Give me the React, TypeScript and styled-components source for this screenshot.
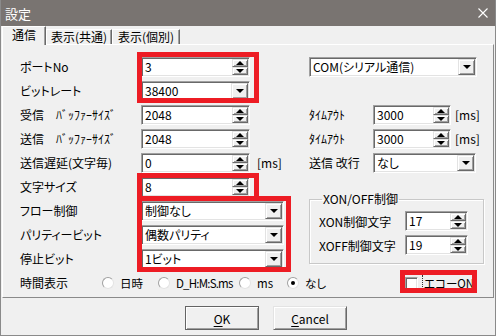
import React from "react";
import styled, { createGlobalStyle, css } from "styled-components";

const GlobalStyle = createGlobalStyle`
  html, body {
    margin: 0;
    padding: 0;
    background: #f0f0f0;
  }
  body {
    font-family: "Noto Sans CJK JP", "Noto Sans", sans-serif;
    font-size: 12px;
    color: #000;
    font-feature-settings: "palt";
  }
`;

const sunken = css`
  border: 1px solid;
  border-color: #a0a0a0 #ffffff #ffffff #a0a0a0;
  box-shadow: inset 1px 1px 0 #696969, inset -1px -1px 0 #e3e3e3;
`;

const raised = css`
  background: #f0f0f0;
  border: 1px solid;
  border-color: #e3e3e3 #696969 #696969 #e3e3e3;
  box-shadow: inset 1px 1px 0 #ffffff, inset -1px -1px 0 #a0a0a0;
`;

const Window = styled.div`
  position: relative;
  width: 496px;
  height: 336px;
  box-sizing: border-box;
  display: flex;
  flex-direction: column;
  background: #f0f0f0;
  border: 1px solid #8a8a8a;
  border-top: none;
  overflow: hidden;
`;

const TitleBar = styled.div`
  height: 26px;
  margin: 0 -1px;
  flex: none;
  display: flex;
  align-items: center;
  justify-content: space-between;
  background: #797471;
  color: #fff;
  font-size: 13px;
  padding: 0 8px 0 5px;
`;

const TabStrip = styled.div`
  height: 18px;
  flex: none;
  display: flex;
  align-items: flex-end;
  padding-left: 1px;
  position: relative;
  z-index: 1;
`;

const Tab = styled.div<{ $active?: boolean; $w: number }>`
  box-sizing: border-box;
  width: ${(p) => p.$w}px;
  height: ${(p) => (p.$active ? 19 : 15)}px;
  margin-bottom: ${(p) => (p.$active ? -1 : 0)}px;
  display: flex;
  align-items: center;
  justify-content: center;
  background: #f0f0f0;
  border: 1px solid;
  border-bottom: none;
  border-color: #ffffff #696969 #696969 #ffffff;
  box-shadow: inset -1px 0 0 #a0a0a0;
  line-height: 14px;
  padding-bottom: ${(p) => (p.$active ? 2 : 0)}px;
`;

const Panel = styled.div`
  box-sizing: border-box;
  height: 254px;
  flex: none;
  margin: 0 1px;
  padding: 10px 0 0 17px;
  border: 1px solid;
  border-color: #ffffff #8a8a8a #8a8a8a #ffffff;
`;

const Form = styled.div`
  display: grid;
  grid-template-columns: 121px 168px 64px 111px;
  grid-template-rows: repeat(10, 24px);
  align-items: center;
`;

const Cell = styled.div<{ $col: string; $row: string }>`
  grid-column: ${(p) => p.$col};
  grid-row: ${(p) => p.$row};
  display: flex;
  align-items: center;
  white-space: nowrap;
  line-height: 16px;
`;

const Field = styled.div<{ $w: number }>`
  box-sizing: border-box;
  width: ${(p) => p.$w}px;
  height: 20px;
  flex: none;
  display: flex;
  background: #fff;
  ${sunken}
`;

const Value = styled.div`
  flex: 1;
  margin: 1px;
  padding-left: 2px;
  line-height: 16px;
  white-space: nowrap;
  overflow: hidden;
`;

const SpinBox = styled.div`
  width: 16px;
  margin: 1px 1px 1px 0;
  display: flex;
  flex-direction: column;
`;

const SpinHalf = styled.div`
  flex: 1;
  box-sizing: border-box;
  display: flex;
  align-items: center;
  justify-content: center;
  ${raised}
`;

const DropButton = styled.div`
  box-sizing: border-box;
  width: 17px;
  margin: 1px 1px 1px 0;
  display: flex;
  align-items: center;
  justify-content: center;
  ${raised}
`;

const Arrow = styled.span<{ $up?: boolean }>`
  width: 0;
  height: 0;
  border-left: 4px solid transparent;
  border-right: 4px solid transparent;
  ${(p) =>
    p.$up
      ? "border-bottom: 4px solid #000;"
      : "border-top: 4px solid #000;"}
`;

const Unit = styled.span<{ $gap: number }>`
  margin-left: ${(p) => p.$gap}px;
`;

const Group = styled.fieldset`
  grid-column: 3 / 5;
  grid-row: 7 / 10;
  align-self: start;
  box-sizing: border-box;
  height: 71px;
  margin: -6px 0 0 0;
  padding: 6px 0 0 9px;
  border: 1px solid #c8c8c8;
  box-shadow: 1px 1px 0 #fff, inset 1px 1px 0 #fff;
  min-width: 0;
`;

const Legend = styled.legend`
  padding: 0 1px;
  margin-left: 3px;
  line-height: 12px;
`;

const GroupGrid = styled.div`
  display: grid;
  grid-template-columns: 86px 63px;
  grid-auto-rows: 20px;
  row-gap: 4px;
  align-items: center;
`;

const TimeRow = styled.div`
  grid-column: 1 / -1;
  grid-row: 10;
  display: flex;
  align-items: center;
  white-space: nowrap;
  line-height: 16px;
`;

const TimeLabel = styled.span`
  width: 82px;
  flex: none;
`;

const RadioItem = styled.label<{ $w: number; $tight?: boolean }>`
  width: ${(p) => p.$w}px;
  flex: none;
  display: flex;
  align-items: center;
  gap: 6px;
  font-size: 11.5px;
  letter-spacing: ${(p) => (p.$tight ? "-0.8px" : "0")};
`;

const RadioDot = styled.span<{ $on?: boolean }>`
  box-sizing: border-box;
  width: 12px;
  height: 12px;
  flex: none;
  border-radius: 50%;
  background: #fff;
  border: 1px solid;
  border-color: #a0a0a0 #e3e3e3 #e3e3e3 #a0a0a0;
  display: flex;
  align-items: center;
  justify-content: center;
  &::after {
    content: "";
    width: 4px;
    height: 4px;
    border-radius: 50%;
    background: ${(p) => (p.$on ? "#000" : "transparent")};
  }
`;

const Echo = styled.label`
  margin-left: auto;
  margin-right: 8px;
  box-sizing: border-box;
  width: 77px;
  padding-left: 6px;
  display: flex;
  align-items: center;
  gap: 4px;
`;

const CheckBox = styled.span`
  box-sizing: border-box;
  width: 13px;
  height: 13px;
  flex: none;
  background: #fff;
  ${sunken}
`;

const EchoText = styled.span`
  border-left: 1px dotted #333;
  padding-left: 1px;
  font-size: 11.5px;
`;

const ButtonBar = styled.div`
  flex: 1;
  display: flex;
  align-items: flex-start;
  padding: 8px 0 0 184px;
  gap: 14px;
`;

const Button = styled.div<{ $default?: boolean }>`
  box-sizing: border-box;
  width: 74px;
  height: 24px;
  display: flex;
  align-items: center;
  justify-content: center;
  ${raised}
  ${(p) => (p.$default ? "outline: 1px solid #646464; outline-offset: -1px;" : "")}
  & u {
    text-underline-offset: 2px;
  }
`;

const Mark = styled.div<{ $x: number; $y: number; $w: number; $h: number }>`
  position: absolute;
  left: ${(p) => p.$x}px;
  top: ${(p) => p.$y}px;
  width: ${(p) => p.$w}px;
  height: ${(p) => p.$h}px;
  box-sizing: border-box;
  border: 5px solid #ed1c24;
  pointer-events: none;
`;

const Spinner = ({ w, value }: { w: number; value: string }) => (
  <Field $w={w}>
    <Value>{value}</Value>
    <SpinBox>
      <SpinHalf>
        <Arrow $up />
      </SpinHalf>
      <SpinHalf>
        <Arrow />
      </SpinHalf>
    </SpinBox>
  </Field>
);

const Combo = ({ w, value }: { w: number; value: string }) => (
  <Field $w={w}>
    <Value>{value}</Value>
    <DropButton>
      <Arrow />
    </DropButton>
  </Field>
);

const Radio = ({
  w,
  label,
  on,
  tight,
}: {
  w: number;
  label: string;
  on?: boolean;
  tight?: boolean;
}) => (
  <RadioItem $w={w} $tight={tight}>
    <RadioDot $on={on} />
    {label}
  </RadioItem>
);

const CloseIcon = () => (
  <svg width="10" height="10" viewBox="0 0 10 10">
    <path d="M0.5 0.5 L9.5 9.5 M9.5 0.5 L0.5 9.5" stroke="#fff" strokeWidth="1.1" />
  </svg>
);

const App: React.FC = () => {
  return (
    <>
      <GlobalStyle />
      <Window>
        <TitleBar>
          <span>設定</span>
          <CloseIcon />
        </TitleBar>
        <TabStrip>
          <Tab $active $w={44}>通信</Tab>
          <Tab $w={66}>表示(共通)</Tab>
          <Tab $w={68}>表示(個別)</Tab>
        </TabStrip>
        <Panel>
          <Form>
            <Cell $col="1" $row="1">ポートNo</Cell>
            <Cell $col="2" $row="1"><Spinner w={109} value="3" /></Cell>
            <Cell $col="3 / 5" $row="1"><Combo w={168} value="COM(シリアル通信)" /></Cell>

            <Cell $col="1" $row="2">ビットレート</Cell>
            <Cell $col="2" $row="2"><Combo w={109} value="38400" /></Cell>

            <Cell $col="1" $row="3">受信　ﾊﾞｯﾌｧｰｻｲｽﾞ</Cell>
            <Cell $col="2" $row="3"><Spinner w={109} value="2048" /></Cell>
            <Cell $col="3" $row="3">ﾀｲﾑｱｳﾄ</Cell>
            <Cell $col="4" $row="3">
              <Spinner w={78} value="3000" />
              <Unit $gap={4}>[ms]</Unit>
            </Cell>

            <Cell $col="1" $row="4">送信　ﾊﾞｯﾌｧｰｻｲｽﾞ</Cell>
            <Cell $col="2" $row="4"><Spinner w={109} value="2048" /></Cell>
            <Cell $col="3" $row="4">ﾀｲﾑｱｳﾄ</Cell>
            <Cell $col="4" $row="4">
              <Spinner w={78} value="3000" />
              <Unit $gap={4}>[ms]</Unit>
            </Cell>

            <Cell $col="1" $row="5">送信遅延(文字毎)</Cell>
            <Cell $col="2" $row="5">
              <Spinner w={109} value="0" />
              <Unit $gap={7}>[ms]</Unit>
            </Cell>
            <Cell $col="3" $row="5">送信 改行</Cell>
            <Cell $col="4" $row="5"><Combo w={103} value="なし" /></Cell>

            <Cell $col="1" $row="6">文字サイズ</Cell>
            <Cell $col="2" $row="6"><Spinner w={109} value="8" /></Cell>

            <Cell $col="1" $row="7">フロー制御</Cell>
            <Cell $col="2" $row="7"><Combo w={143} value="制御なし" /></Cell>

            <Cell $col="1" $row="8">パリティービット</Cell>
            <Cell $col="2" $row="8"><Combo w={143} value="偶数パリティ" /></Cell>

            <Cell $col="1" $row="9">停止ビット</Cell>
            <Cell $col="2" $row="9"><Combo w={143} value="1ビット" /></Cell>

            <Group>
              <Legend>XON/OFF制御</Legend>
              <GroupGrid>
                <span>XON制御文字</span>
                <Spinner w={63} value="17" />
                <span>XOFF制御文字</span>
                <Spinner w={63} value="19" />
              </GroupGrid>
            </Group>

            <TimeRow>
              <TimeLabel>時間表示</TimeLabel>
              <Radio w={56} label="日時" />
              <Radio w={81} label="D_H:M:S.ms" tight />
              <Radio w={48} label="ms" />
              <Radio w={40} label="なし" on />
              <Echo>
                <CheckBox />
                <EchoText>エコーON</EchoText>
              </Echo>
            </TimeRow>
          </Form>
        </Panel>
        <ButtonBar>
          <Button $default>
            <span><u>O</u>K</span>
          </Button>
          <Button>
            <span><u>C</u>ancel</span>
          </Button>
        </ButtonBar>

        <Mark $x={136} $y={52} $w={122} $h={51} />
        <Mark $x={136} $y={173} $w={122} $h={28} />
        <Mark $x={136} $y={196} $w={154} $h={76} />
        <Mark $x={399} $y={270} $w={77} $h={23} />
      </Window>
    </>
  );
};

export default App;
